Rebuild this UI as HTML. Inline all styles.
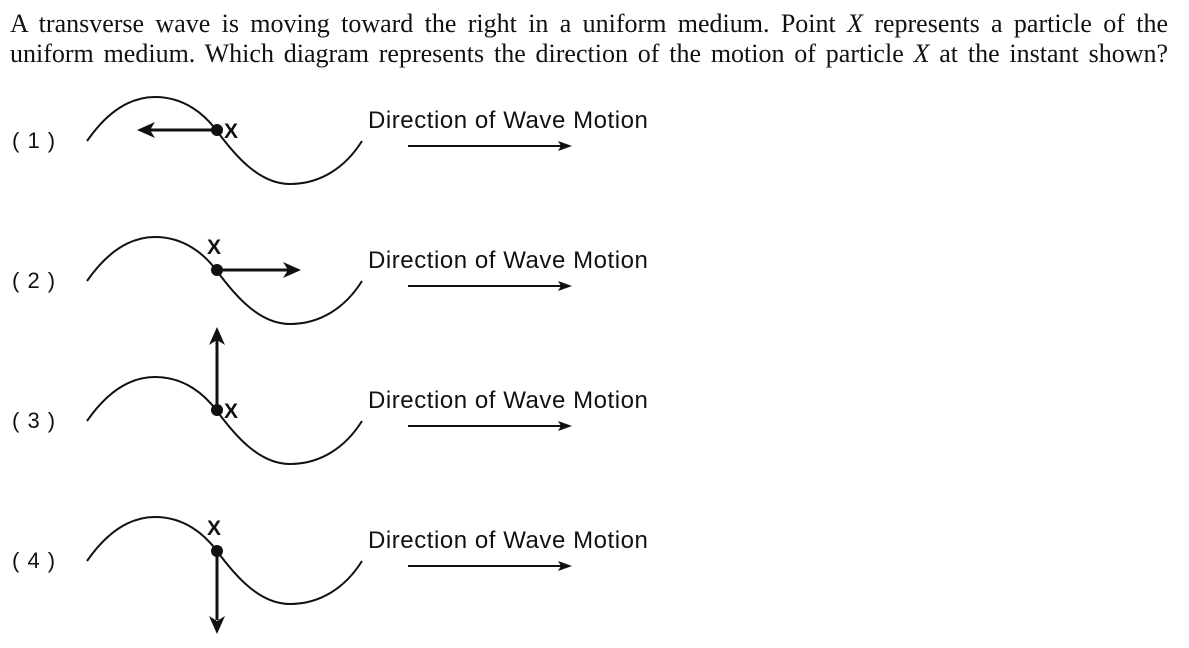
<!DOCTYPE html>
<html><head><style>
body{margin:0;background:#fff;width:1189px;height:648px;overflow:hidden;position:relative;font-family:"Liberation Serif",serif;color:#111}
.q{position:absolute;left:10px;width:1158px;font-size:26px;line-height:30px;text-align:justify;text-align-last:justify;white-space:nowrap}
.n{position:absolute;left:12px;font-size:22px;font-family:"Liberation Sans",sans-serif;letter-spacing:1px}
.d{position:absolute;left:368px;font-family:"Liberation Sans",sans-serif;font-size:24px;letter-spacing:0.55px}
svg{position:absolute;left:0;top:0}
</style></head><body>
<div class="q" style="top:9px">A transverse wave is moving toward the right in a uniform medium. Point <i>X</i> represents a particle of the</div>
<div class="q" style="top:39px">uniform medium. Which diagram represents the direction of the motion of particle <i>X</i> at the instant shown?</div>
<div class="n" style="top:128px">( 1 )</div>
<div class="n" style="top:268px">( 2 )</div>
<div class="n" style="top:408px">( 3 )</div>
<div class="n" style="top:548px">( 4 )</div>
<div class="d" style="top:107px">Direction of Wave Motion</div>
<div class="d" style="top:247px">Direction of Wave Motion</div>
<div class="d" style="top:387px">Direction of Wave Motion</div>
<div class="d" style="top:527px">Direction of Wave Motion</div>
<svg width="1189" height="648">
<defs>
<g id="w"><path d="M87,141 C110,108 133,97 155,97 C185,97 205,115 217,131 C236,157 260,184 290,184 C320,184 345,168 362,141" fill="none" stroke="#111" stroke-width="2"/>
<line x1="408" y1="146" x2="562" y2="146" stroke="#111" stroke-width="2"/>
<path d="M572,146 L558,141 L561,146 L558,151Z" fill="#111"/></g>
</defs>
<use href="#w"/><use href="#w" y="140"/><use href="#w" y="280"/><use href="#w" y="420"/>
<g fill="#111" stroke="#111" stroke-width="3">
<circle cx="217" cy="130" r="4.5"/><line x1="217" y1="130" x2="150" y2="130"/>
<path d="M137,130 L155,122 L150,130 L155,138Z" stroke="none"/>
<circle cx="217" cy="270" r="4.5"/><line x1="217" y1="270" x2="288" y2="270"/>
<path d="M301,270 L283,262 L288,270 L283,278Z" stroke="none"/>
<circle cx="217" cy="410" r="4.5"/><line x1="217" y1="410" x2="217" y2="340"/>
<path d="M217,327 L209,345 L217,340 L225,345Z" stroke="none"/>
<circle cx="217" cy="551" r="4.5"/><line x1="217" y1="551" x2="217" y2="620"/>
<path d="M217,634 L209,616 L217,621 L225,616Z" stroke="none"/>
</g>
<g font-family="Liberation Sans,sans-serif" font-weight="bold" font-size="21" fill="#111">
<text x="224" y="138">X</text><text x="207" y="254">X</text><text x="224" y="418">X</text><text x="207" y="535">X</text>
</g>
</svg>
</body></html>
